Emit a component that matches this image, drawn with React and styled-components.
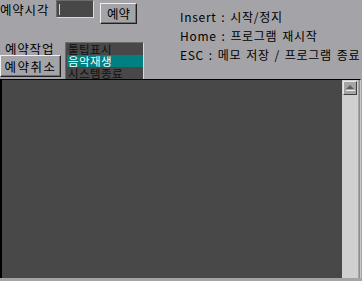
import React from "react";
import styled, { createGlobalStyle } from "styled-components";

const Global = createGlobalStyle`
  html, body { margin: 0; padding: 0; background: #a4a4a8; }
  body { width: 362px; height: 281px; overflow: hidden;
    font-family: "Noto Sans CJK KR", "Noto Sans", sans-serif; font-size: 12px; color: #000; }
`;

const Window = styled.div`
  width: 362px; height: 281px; display: flex; flex-direction: column;
  background: #a4a4a8;
`;

const Top = styled.div`
  height: 79px; display: flex; flex-direction: row;
`;

const LeftBlock = styled.div`
  width: 144px; display: flex; flex-direction: column;
`;

const RowA = styled.div`
  height: 42px; display: flex; align-items: flex-start;
`;

const RowB = styled.div`
  height: 37px; display: flex; align-items: flex-start;
`;

const Label = styled.span`
  font-size: 12.5px; line-height: 14px; white-space: nowrap; letter-spacing: 0.8px;
  margin-top: ${p => p.$top || 0}px; margin-left: ${p => p.$left || 0}px;
  width: ${p => p.$w}px; display: block;
`;

const Input = styled.div`
  width: 38px; height: 18px; box-sizing: border-box;
  background: #484848;
  border-top: 1px solid #6c6c6c; border-left: 1px solid #6c6c6c;
  border-right: 1px solid #d8d8d8; border-bottom: 1px solid #d8d8d8;
  margin-left: 6px; display: flex; align-items: center;
`;

const Caret = styled.div`
  width: 1px; height: 11px; background: #d0d0d0; margin-left: 2px;
`;

const Button = styled.div`
  width: ${p => p.$w}px; height: ${p => p.$h}px; box-sizing: border-box;
  margin-left: ${p => p.$left || 0}px; margin-top: ${p => p.$top || 0}px;
  border-top: 1px solid #f0f0f0; border-left: 1px solid #f0f0f0;
  border-right: 1px solid #202020; border-bottom: 1px solid #202020;
  box-shadow: inset -1px -1px 0 #707070;
  display: flex; align-items: center; justify-content: center;
  font-size: 12.5px; letter-spacing: ${p => p.$ls || 0}px; white-space: nowrap;
`;

const Col = styled.div`
  width: 61px; display: flex; flex-direction: column;
`;

const List = styled.div`
  width: 79px; height: 37px; margin-left: 4px; box-sizing: border-box;
  background: #484848; overflow: hidden;
  border-top: 1px solid #6c6c6c; border-left: 1px solid #6c6c6c;
  border-right: 1px solid #d8d8d8;
  display: flex; flex-direction: column; padding-left: 1px;
`;

const Item = styled.div`
  height: 12px; line-height: 12px; font-size: 11.5px; white-space: nowrap;
  padding-left: 1px; flex-shrink: 0; letter-spacing: 0.4px;
  background: ${p => (p.$sel ? "#008080" : "transparent")};
  color: ${p => (p.$sel ? "#ffffff" : "#101010")};
`;

const Help = styled.div`
  margin-left: 36px; padding-top: 10px; display: flex; flex-direction: column; gap: 5px;
`;

const HelpLine = styled.div`
  font-size: 12px; line-height: 14px; white-space: nowrap;
  letter-spacing: 0.7px; word-spacing: 1.5px;
`;

const Memo = styled.div`
  flex: 1; margin-bottom: 3px; display: flex; box-sizing: border-box;
  border-top: 1px solid #000; border-left: 2px solid #000;
  border-right: 1px solid #c8c8c8; box-shadow: inset -1px 0 0 #8c8c8c;
  margin-right: 1px;
`;

const TextArea = styled.div`
  flex: 1; background: #484848;
`;

const Scroll = styled.div`
  width: 16px; background: #d0d0d0; margin-right: 2px; display: flex;
  flex-direction: column; align-items: center; padding-top: 1px;
`;

const ArrowBtn = styled.div`
  width: 14px; height: 14px; box-sizing: border-box; background: #a4a4a8;
  border-top: 1px solid #e8e8e8; border-left: 1px solid #e8e8e8;
  border-right: 1px solid #404040; border-bottom: 1px solid #404040;
  display: flex; align-items: center; justify-content: center;
`;

export default function App() {
  return (
    <>
      <Global />
      <Window>
        <Top>
          <LeftBlock>
            <RowA>
              <Label $top={3} $w={50}>예약시각</Label>
              <Input><Caret /></Input>
              <Button $w={37} $h={21} $top={3} $left={6}>예약</Button>
            </RowA>
            <RowB>
              <Col>
                <Label $left={5} $w={56}>예약작업</Label>
                <Button $w={61} $h={22} $top={-1} $ls={1.5}>예약취소</Button>
              </Col>
              <List>
                <Item>툴팁표시</Item>
                <Item $sel>음악재생</Item>
                <Item>시스템종료</Item>
              </List>
            </RowB>
          </LeftBlock>
          <Help>
            <HelpLine>Insert : 시작/정지</HelpLine>
            <HelpLine>Home : 프로그램 재시작</HelpLine>
            <HelpLine>ESC : 메모 저장 / 프로그램 종료</HelpLine>
          </Help>
        </Top>
        <Memo>
          <TextArea />
          <Scroll>
            <ArrowBtn>
              <svg width="10" height="8" viewBox="0 0 10 8">
                <polygon points="5,1 9,5 1,5" fill="#606060" />
                <rect x="1" y="6" width="9" height="1" fill="#f0f0f0" />
              </svg>
            </ArrowBtn>
          </Scroll>
        </Memo>
      </Window>
    </>
  );
}
